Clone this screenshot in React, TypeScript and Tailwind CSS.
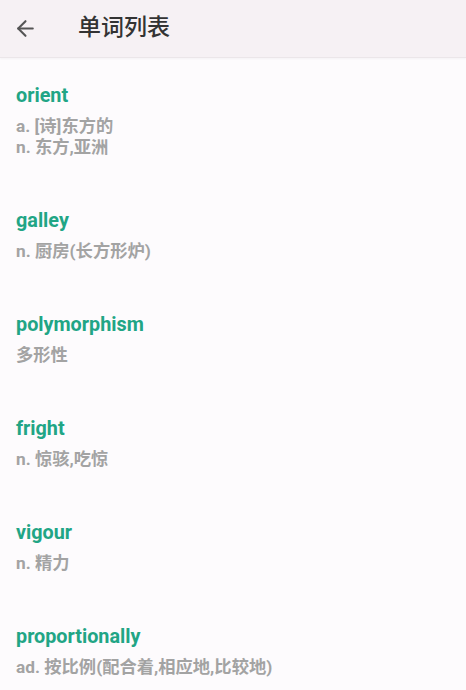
import { ArrowLeft } from 'lucide-react'

const words = [
  { word: 'orient', defs: ['a. [诗]东方的', 'n. 东方,亚洲'] },
  { word: 'galley', defs: ['n. 厨房(长方形炉)'] },
  { word: 'polymorphism', defs: ['多形性'] },
  { word: 'fright', defs: ['n. 惊骇,吃惊'] },
  { word: 'vigour', defs: ['n. 精力'] },
  { word: 'proportionally', defs: ['ad. 按比例(配合着,相应地,比较地)'] },
]

export default function App() {
  return (
    <div
      className="h-[690px] w-[466px] overflow-hidden bg-[#fdfbfd]"
      style={{ fontFamily: 'Roboto, "Noto Sans CJK SC", sans-serif' }}
    >
      {/* Toolbar */}
      <div className="flex h-[58px] items-center border-b border-[#ebe6e9] bg-[#f6f1f4] shadow-[0_1px_2px_rgba(0,0,0,0.04)]">
        <button className="ml-[13px] p-0 text-[#555]">
          <ArrowLeft size={25} strokeWidth={2} />
        </button>
        <h1 className="ml-[40px] text-[23px] font-medium text-[#333]">单词列表</h1>
      </div>

      {/* Word list */}
      <div className="flex flex-col">
        {words.map(w => (
          <div key={w.word} className="px-4 pt-[26px] pb-[25px]">
            <p className="text-[19.8px] leading-[24px] font-bold text-[#21a585]">{w.word}</p>
            <div className="mt-2">
              {w.defs.map(d => (
                <p key={d} className="text-[17.3px] leading-[21px] font-bold text-[#a3a3a3]">{d}</p>
              ))}
            </div>
          </div>
        ))}
      </div>
    </div>
  )
}
